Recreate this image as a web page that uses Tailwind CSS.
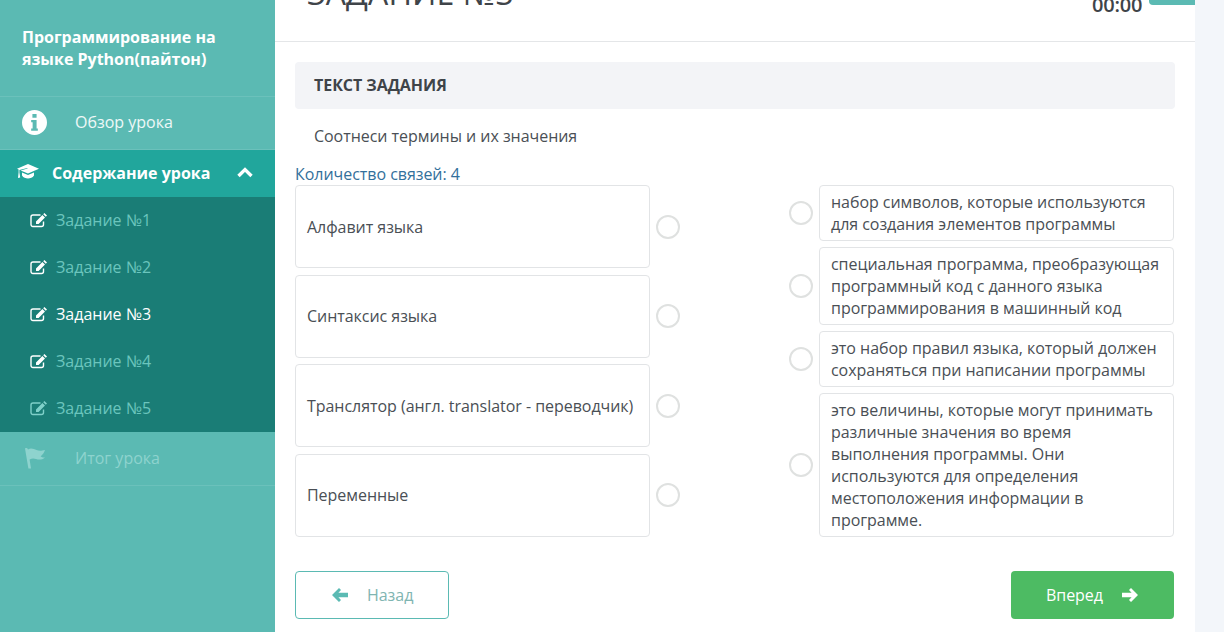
<!DOCTYPE html>
<html lang="ru">
<head>
  <meta charset="UTF-8" />
  <title>Задание №3</title>
  <script src="https://cdn.jsdelivr.net/npm/@tailwindcss/browser@4"></script>
</head>
<body class="h-[632px] overflow-hidden bg-[#f3f6fa] font-['Open_Sans',sans-serif] text-[16px] text-[#4a4f55]">
  <div class="flex h-[632px]">
    <!-- Sidebar -->
    <aside class="w-[275px] shrink-0 bg-[#5bbab3] text-white">
      <div class="h-[97px] border-b border-white/10 pl-[22px] pt-[26px] text-[16px] leading-[22px] font-bold">Программирование на<br />языке Python(пайтон)</div>
      <div class="flex h-[53px] items-center border-b border-white/10 pb-[2px]">
        <svg class="ml-[22px] h-[25px] w-[25px]" viewBox="0 0 24 24"><path fill="#fff" fill-rule="evenodd" d="M12 0a12 12 0 1 1 0 24a12 12 0 0 1 0-24zM10 3.8v3.6h4V3.8zM8.8 9.6v2.2h1.4v6H8.8V20h6.4v-2.2h-1.2V9.6z"/></svg>
        <span class="ml-[28px] text-white/90">Обзор урока</span>
      </div>
      <div class="flex h-[47px] items-center bg-[#21a69c] pb-[2px] font-bold">
        <svg class="ml-[17px] h-[19px] w-[22px]" viewBox="0 0 22 19"><path fill="#fff" d="M11 1L22 5.8L11 10.4L3.6 7.4L10.6 5.6L10.3 4.9L2.4 7L2.4 9.6L3.2 14.6L1 15L1.6 9.6V6.6L0 5.8zM5 9.4L11 12L17 9.4V12.6C15.6 14.8 13.4 15.6 11 15.6C8.6 15.6 6.4 14.8 5 12.6z"/></svg>
        <span class="ml-[13px]">Содержание урока</span>
        <svg class="ml-[27px] h-[11px] w-[16px]" viewBox="0 0 16 11"><path fill="none" stroke="#fff" stroke-width="3.4" d="M1.5 9L8 2.6L14.5 9"/></svg>
      </div>
      <ul class="h-[235px] bg-[#1a7d76]">
        <li class="flex h-[47px] items-center pb-[2px] pl-[30px] text-[#6bc5bd]">
          <svg class="h-[16px] w-[18px]" viewBox="0 0 18 16"><path fill="none" stroke="#fff" stroke-width="1.4" d="M13.5 9.5V12.5a2 2 0 0 1-2 2H3a2 2 0 0 1-2-2V5a2 2 0 0 1 2-2h7.5"/><path fill="#fff" d="M6 9.4L12.4 3L15 5.6L8.6 12H6zM13.2 2.2L14.4 1L17 3.6L15.8 4.8z"/></svg>
          <span class="ml-[8px]">Задание №1</span>
        </li>
        <li class="flex h-[47px] items-center pb-[2px] pl-[30px] text-[#6bc5bd]">
          <svg class="h-[16px] w-[18px]" viewBox="0 0 18 16"><path fill="none" stroke="#fff" stroke-width="1.4" d="M13.5 9.5V12.5a2 2 0 0 1-2 2H3a2 2 0 0 1-2-2V5a2 2 0 0 1 2-2h7.5"/><path fill="#fff" d="M6 9.4L12.4 3L15 5.6L8.6 12H6zM13.2 2.2L14.4 1L17 3.6L15.8 4.8z"/></svg>
          <span class="ml-[8px]">Задание №2</span>
        </li>
        <li class="flex h-[47px] items-center pb-[2px] pl-[30px] text-white">
          <svg class="h-[16px] w-[18px]" viewBox="0 0 18 16"><path fill="none" stroke="#fff" stroke-width="1.4" d="M13.5 9.5V12.5a2 2 0 0 1-2 2H3a2 2 0 0 1-2-2V5a2 2 0 0 1 2-2h7.5"/><path fill="#fff" d="M6 9.4L12.4 3L15 5.6L8.6 12H6zM13.2 2.2L14.4 1L17 3.6L15.8 4.8z"/></svg>
          <span class="ml-[8px]">Задание №3</span>
        </li>
        <li class="flex h-[47px] items-center pb-[2px] pl-[30px] text-[#6bc5bd]">
          <svg class="h-[16px] w-[18px]" viewBox="0 0 18 16"><path fill="none" stroke="#fff" stroke-width="1.4" d="M13.5 9.5V12.5a2 2 0 0 1-2 2H3a2 2 0 0 1-2-2V5a2 2 0 0 1 2-2h7.5"/><path fill="#fff" d="M6 9.4L12.4 3L15 5.6L8.6 12H6zM13.2 2.2L14.4 1L17 3.6L15.8 4.8z"/></svg>
          <span class="ml-[8px]">Задание №4</span>
        </li>
        <li class="flex h-[47px] items-center pb-[2px] pl-[30px] text-[#6bc5bd]">
          <svg class="h-[16px] w-[18px]" viewBox="0 0 18 16"><path fill="none" stroke="#7fd0c9" stroke-width="1.4" d="M13.5 9.5V12.5a2 2 0 0 1-2 2H3a2 2 0 0 1-2-2V5a2 2 0 0 1 2-2h7.5"/><path fill="#7fd0c9" d="M6 9.4L12.4 3L15 5.6L8.6 12H6zM13.2 2.2L14.4 1L17 3.6L15.8 4.8z"/></svg>
          <span class="ml-[8px]">Задание №5</span>
        </li>
      </ul>
      <div class="flex h-[54px] items-center border-b border-white/10 pb-[2px] text-[#8ed3ce]">
        <svg class="ml-[24px] h-[22px] w-[22px]" viewBox="0 0 22 22"><path fill="#8ed3ce" d="M1 1.5C2 0.8 3.4 1 4 2.4C7 0.5 10 2 12.5 3C15 4 17 4 21 3C20 6 18.6 7.5 16.6 9.5C18 10.5 20 10.5 21 10.5C18 13 15 13 12 12C10 11.2 8 11 5.6 12.5L7 21.5H4.4z"/></svg>
        <span class="ml-[29px]">Итог урока</span>
      </div>
    </aside>

    <!-- Main -->
    <main class="w-[920px] shrink-0 bg-white tracking-[-0.04px]">
      <header class="relative h-[42px] border-b border-[#e4e6e8]">
        <h1 class="absolute left-[32px] top-[-24px] text-[32px] leading-[34px] tracking-[0.1px] text-[#3f4449]">ЗАДАНИЕ №3</h1>
        <span class="absolute left-[817px] top-[-7px] text-[20px] leading-[24px] font-semibold tracking-[-0.2px] text-[#3f4449]">00:00</span>
        <div class="absolute right-0 top-0 h-[5px] w-[46px] rounded-bl-[4px] bg-[#5bbab3]"></div>
      </header>
      <div class="pl-[20px] pr-[21px] pt-[20px]">
        <div class="mr-[-1px] flex h-[47px] items-center rounded-[4px] bg-[#f3f4f7] pb-[2px] pl-[19px] font-bold text-[#3f4449]">ТЕКСТ ЗАДАНИЯ</div>
        <p class="mt-[16px] pl-[19px] leading-[22px]">Соотнеси термины и их значения</p>
        <p class="mt-[16px] leading-[22px] text-[#33709b]">Количество связей: 4</p>
        <div class="flex justify-between">
          <div class="flex flex-col">
            <div class="flex items-center">
              <div class="flex h-[83px] w-[355px] items-center rounded-[4px] border border-[#e2e4e6] px-[11px]">Алфавит языка</div>
              <span class="ml-[6px] h-[24px] w-[24px] rounded-full border-2 border-[#dfe1e0]"></span>
            </div>
            <div class="mt-[7px] flex items-center">
              <div class="flex h-[83px] w-[355px] items-center rounded-[4px] border border-[#e2e4e6] px-[11px] pb-[2px]">Синтаксис языка</div>
              <span class="ml-[6px] mb-[2px] h-[24px] w-[24px] rounded-full border-2 border-[#dfe1e0]"></span>
            </div>
            <div class="mt-[6px] flex items-center">
              <div class="flex h-[83px] w-[355px] items-center rounded-[4px] border border-[#e2e4e6] px-[11px] whitespace-nowrap">Транслятор (англ. translator - переводчик)</div>
              <span class="ml-[6px] h-[24px] w-[24px] rounded-full border-2 border-[#dfe1e0]"></span>
            </div>
            <div class="mt-[7px] flex items-center">
              <div class="flex h-[83px] w-[355px] items-center rounded-[4px] border border-[#e2e4e6] px-[11px] pb-[2px]">Переменные</div>
              <span class="ml-[6px] mb-[2px] h-[24px] w-[24px] rounded-full border-2 border-[#dfe1e0]"></span>
            </div>
          </div>
          <div class="flex flex-col gap-[6px]">
            <div class="flex items-center">
              <span class="mr-[6px] h-[24px] w-[24px] rounded-full border-2 border-[#dfe1e0]"></span>
              <div class="w-[355px] rounded-[4px] border border-[#e2e4e6] px-[11px] py-[5px] leading-[22px]">набор символов, которые используются<br />для создания элементов программы</div>
            </div>
            <div class="flex items-center">
              <span class="mr-[6px] h-[24px] w-[24px] rounded-full border-2 border-[#dfe1e0]"></span>
              <div class="w-[355px] rounded-[4px] border border-[#e2e4e6] px-[11px] py-[5px] leading-[22px]">специальная программа, преобразующая<br />программный код с данного языка<br />программирования в машинный код</div>
            </div>
            <div class="flex items-center">
              <span class="mr-[6px] h-[24px] w-[24px] rounded-full border-2 border-[#dfe1e0]"></span>
              <div class="w-[355px] rounded-[4px] border border-[#e2e4e6] px-[11px] py-[5px] leading-[22px]">это набор правил языка, который должен<br />сохраняться при написании программы</div>
            </div>
            <div class="flex items-center">
              <span class="mr-[6px] h-[24px] w-[24px] rounded-full border-2 border-[#dfe1e0]"></span>
              <div class="w-[355px] rounded-[4px] border border-[#e2e4e6] px-[11px] py-[5px] leading-[22px]">это величины, которые могут принимать<br />различные значения во время<br />выполнения программы. Они<br />используются для определения<br />местоположения информации в<br />программе.</div>
            </div>
          </div>
        </div>
        <div class="mt-[34px] flex justify-between">
          <button class="flex h-[48px] w-[154px] items-center rounded-[4px] border border-[#5bbab3] pl-[36px] text-[#7fb5b1]">
            <svg class="h-[14px] w-[16px]" viewBox="0 0 16 14"><path fill="#5bbab3" d="M7 0L9 2L6.4 4.8H16V9.2H6.4L9 12L7 14L0 7z"/></svg>
            <span class="ml-[19px]">Назад</span>
          </button>
          <button class="flex h-[48px] w-[163px] items-center rounded-[4px] bg-[#4dbb63] pl-[35px] text-white">
            <span>Вперед</span>
            <svg class="ml-[19px] h-[14px] w-[16px]" viewBox="0 0 16 14"><path fill="#fff" d="M9 0L7 2L9.6 4.8H0V9.2H9.6L7 12L9 14L16 7z"/></svg>
          </button>
        </div>
      </div>
    </main>
  </div>
</body>
</html>
